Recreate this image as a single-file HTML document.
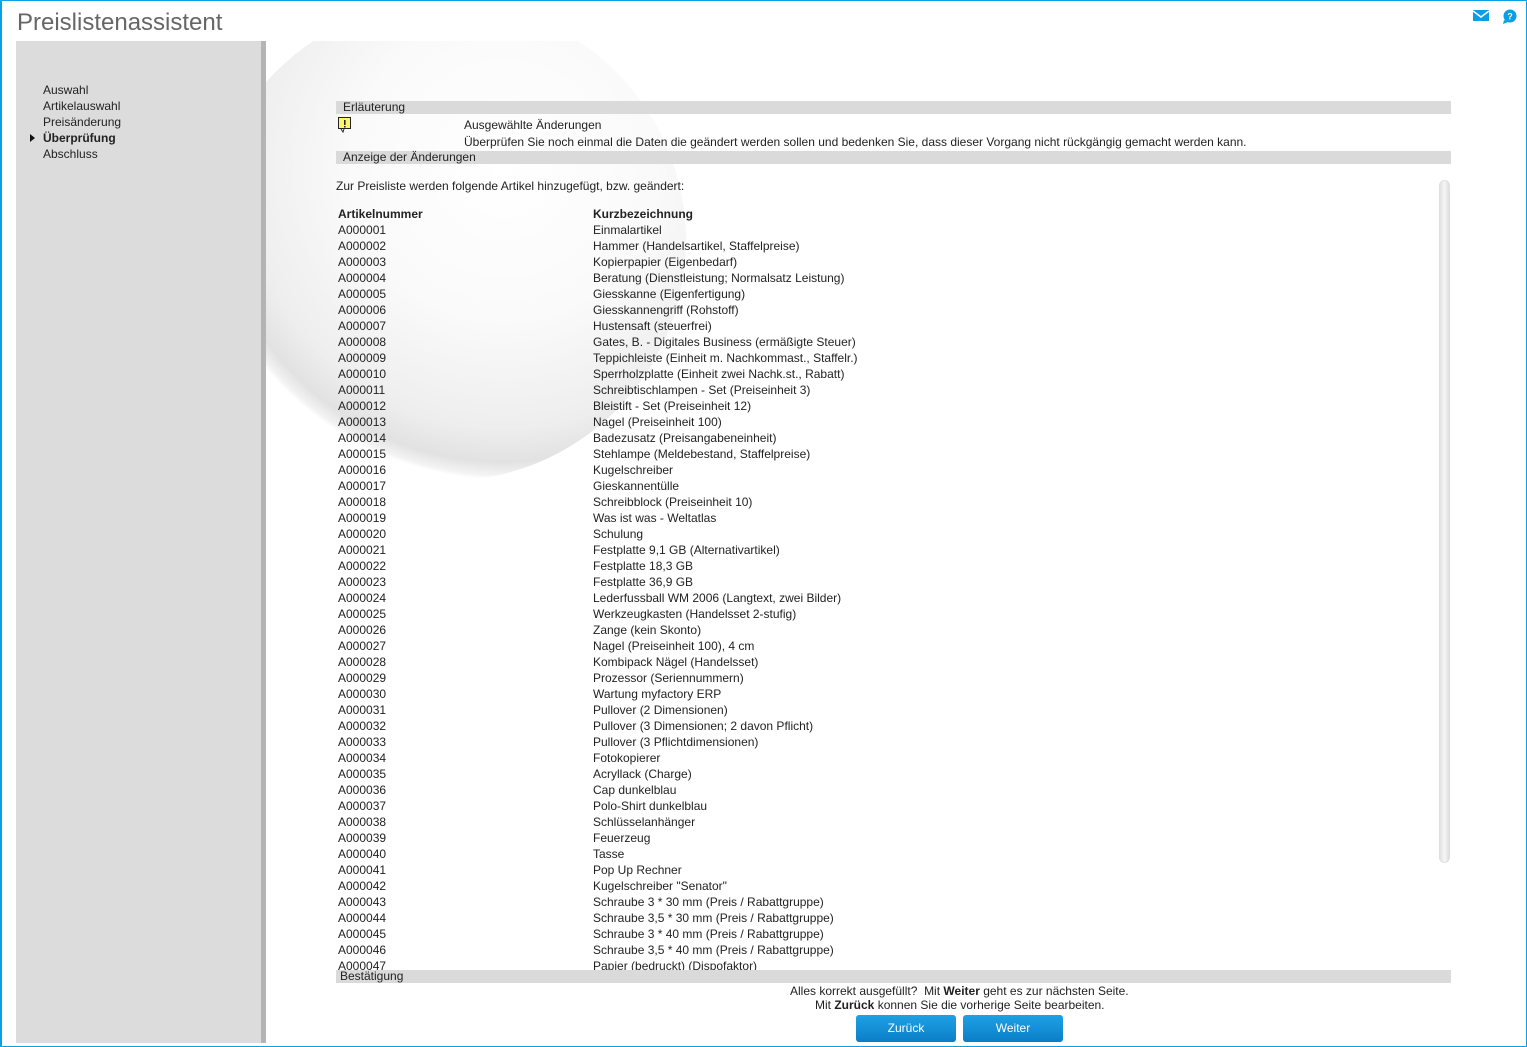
<!DOCTYPE html>
<html><head><meta charset="utf-8"><style>
*{margin:0;padding:0;box-sizing:border-box}
body{width:1527px;height:1047px;overflow:hidden;background:#fff;font-family:"Liberation Sans",Arial,sans-serif;font-size:12px;color:#222;position:relative}
.frame{position:absolute;left:0;top:0;width:1527px;height:1047px;border:1px solid #0aa0e6;border-left:2px solid #0aa0e6}
.title{position:absolute;left:17px;top:9px;font-size:24px;color:#666}
.side{position:absolute;left:16px;top:41px;width:245px;height:1002px;background:#dcdcdc}
.stripe{position:absolute;left:261px;top:41px;width:5px;height:1002px;background:#b4b4b4}
.nav{position:absolute;left:43px;top:82px;line-height:16px}
.nav .act{font-weight:bold}
.arrow{position:absolute;left:30px;top:134px;width:0;height:0;border-left:5px solid #111;border-top:4px solid transparent;border-bottom:4px solid transparent}
.globe{position:absolute;left:266px;top:41px;width:430px;height:450px;overflow:hidden}
.globe div{position:absolute;left:-60px;top:-40px;width:480px;height:480px;border-radius:50%;background:radial-gradient(circle at 62% 35%,#fff 0%,#fafafa 35%,#eeeeee 60%,#e2e2e2 68%,#f3f3f3 71%,rgba(255,255,255,0) 72%)}
.bar{position:absolute;left:336px;width:1115px;height:13px;background:#dadada;line-height:13px;padding-left:7px}
.t{position:absolute;white-space:nowrap}
.rows{position:absolute;left:338px;top:206px;width:1090px;line-height:16px;height:764px;overflow:hidden}
.rows .r{height:16px;position:relative;white-space:nowrap}
.rows .r span{position:absolute;left:255px;top:0}
.scroll{position:absolute;left:1439px;top:180px;width:11px;height:683px;border-radius:6px;background:linear-gradient(90deg,#e2e2e2,#f6f6f6,#dedede);border:1px solid #e0e0e0}
.btn{position:absolute;top:1015px;width:100px;height:27px;border-radius:3px;background:linear-gradient(#1fa1e4,#0a7ec8);color:#fff;text-align:center;line-height:27px;font-size:12px}
</style></head><body>
<div class="frame"></div>
<div class="title">Preislistenassistent</div>
<svg style="position:absolute;left:1473px;top:10px" width="16" height="11"><rect width="16" height="11" fill="#0a9ee4"/><path d="M0 1 L8 7 L16 1" stroke="#fff" stroke-width="1.5" fill="none"/></svg>
<svg style="position:absolute;left:1501px;top:9px" width="16" height="15"><circle cx="9" cy="7" r="6.5" fill="#0a9ee4"/><path d="M3 11 L2 15 L7 13z" fill="#0a9ee4"/><text x="9" y="10.5" font-size="9" font-weight="bold" fill="#fff" text-anchor="middle" font-family="Liberation Sans">?</text></svg>
<div class="side"></div><div class="stripe"></div>
<div class="arrow"></div>
<div class="nav">Auswahl<br>Artikelauswahl<br>Preisänderung<br><span class="act">Überprüfung</span><br>Abschluss</div>
<div class="globe"><div></div></div>
<div class="bar" style="top:101px">Erläuterung</div>
<svg style="position:absolute;left:338px;top:117px" width="14" height="16"><rect x="0.5" y="0.5" width="12" height="11" fill="#fff46a" stroke="#222"/><path d="M3 12 L5 15 L6 12" fill="#fff" stroke="#222"/><rect x="6" y="3" width="1.6" height="5" fill="#222"/><rect x="6" y="9" width="1.6" height="1.5" fill="#222"/></svg>
<div class="t" style="left:464px;top:118px">Ausgewählte Änderungen</div>
<div class="t" style="left:464px;top:135px">Überprüfen Sie noch einmal die Daten die geändert werden sollen und bedenken Sie, dass dieser Vorgang nicht rückgängig gemacht werden kann.</div>
<div class="bar" style="top:151px">Anzeige der Änderungen</div>
<div class="t" style="left:336px;top:179px">Zur Preisliste werden folgende Artikel hinzugefügt, bzw. geändert:</div>
<div class="rows">
<div class="r" style="font-weight:bold">Artikelnummer<span>Kurzbezeichnung</span></div>
<div class="r">A000001<span>Einmalartikel</span></div>
<div class="r">A000002<span>Hammer (Handelsartikel, Staffelpreise)</span></div>
<div class="r">A000003<span>Kopierpapier (Eigenbedarf)</span></div>
<div class="r">A000004<span>Beratung (Dienstleistung; Normalsatz Leistung)</span></div>
<div class="r">A000005<span>Giesskanne (Eigenfertigung)</span></div>
<div class="r">A000006<span>Giesskannengriff (Rohstoff)</span></div>
<div class="r">A000007<span>Hustensaft (steuerfrei)</span></div>
<div class="r">A000008<span>Gates, B. - Digitales Business (ermäßigte Steuer)</span></div>
<div class="r">A000009<span>Teppichleiste (Einheit m. Nachkommast., Staffelr.)</span></div>
<div class="r">A000010<span>Sperrholzplatte (Einheit zwei Nachk.st., Rabatt)</span></div>
<div class="r">A000011<span>Schreibtischlampen - Set (Preiseinheit 3)</span></div>
<div class="r">A000012<span>Bleistift - Set (Preiseinheit 12)</span></div>
<div class="r">A000013<span>Nagel (Preiseinheit 100)</span></div>
<div class="r">A000014<span>Badezusatz (Preisangabeneinheit)</span></div>
<div class="r">A000015<span>Stehlampe (Meldebestand, Staffelpreise)</span></div>
<div class="r">A000016<span>Kugelschreiber</span></div>
<div class="r">A000017<span>Gieskannentülle</span></div>
<div class="r">A000018<span>Schreibblock (Preiseinheit 10)</span></div>
<div class="r">A000019<span>Was ist was - Weltatlas</span></div>
<div class="r">A000020<span>Schulung</span></div>
<div class="r">A000021<span>Festplatte 9,1 GB (Alternativartikel)</span></div>
<div class="r">A000022<span>Festplatte 18,3 GB</span></div>
<div class="r">A000023<span>Festplatte 36,9 GB</span></div>
<div class="r">A000024<span>Lederfussball WM 2006 (Langtext, zwei Bilder)</span></div>
<div class="r">A000025<span>Werkzeugkasten (Handelsset 2-stufig)</span></div>
<div class="r">A000026<span>Zange (kein Skonto)</span></div>
<div class="r">A000027<span>Nagel (Preiseinheit 100), 4 cm</span></div>
<div class="r">A000028<span>Kombipack Nägel (Handelsset)</span></div>
<div class="r">A000029<span>Prozessor (Seriennummern)</span></div>
<div class="r">A000030<span>Wartung myfactory ERP</span></div>
<div class="r">A000031<span>Pullover (2 Dimensionen)</span></div>
<div class="r">A000032<span>Pullover (3 Dimensionen; 2 davon Pflicht)</span></div>
<div class="r">A000033<span>Pullover (3 Pflichtdimensionen)</span></div>
<div class="r">A000034<span>Fotokopierer</span></div>
<div class="r">A000035<span>Acryllack (Charge)</span></div>
<div class="r">A000036<span>Cap dunkelblau</span></div>
<div class="r">A000037<span>Polo-Shirt dunkelblau</span></div>
<div class="r">A000038<span>Schlüsselanhänger</span></div>
<div class="r">A000039<span>Feuerzeug</span></div>
<div class="r">A000040<span>Tasse</span></div>
<div class="r">A000041<span>Pop Up Rechner</span></div>
<div class="r">A000042<span>Kugelschreiber "Senator"</span></div>
<div class="r">A000043<span>Schraube 3 * 30 mm (Preis / Rabattgruppe)</span></div>
<div class="r">A000044<span>Schraube 3,5 * 30 mm (Preis / Rabattgruppe)</span></div>
<div class="r">A000045<span>Schraube 3 * 40 mm (Preis / Rabattgruppe)</span></div>
<div class="r">A000046<span>Schraube 3,5 * 40 mm (Preis / Rabattgruppe)</span></div>
<div class="r">A000047<span>Papier (bedruckt) (Dispofaktor)</span></div>
</div>
<div class="scroll"></div>
<div class="bar" style="top:970px;padding-left:4px">Bestätigung</div>
<div class="t" style="left:790px;top:984px">Alles korrekt ausgefüllt?&nbsp; Mit <b>Weiter</b> geht es zur nächsten Seite.</div>
<div class="t" style="left:815px;top:998px">Mit <b>Zurück</b> konnen Sie die vorherige Seite bearbeiten.</div>
<div class="btn" style="left:856px">Zurück</div>
<div class="btn" style="left:963px">Weiter</div>
</body></html>
